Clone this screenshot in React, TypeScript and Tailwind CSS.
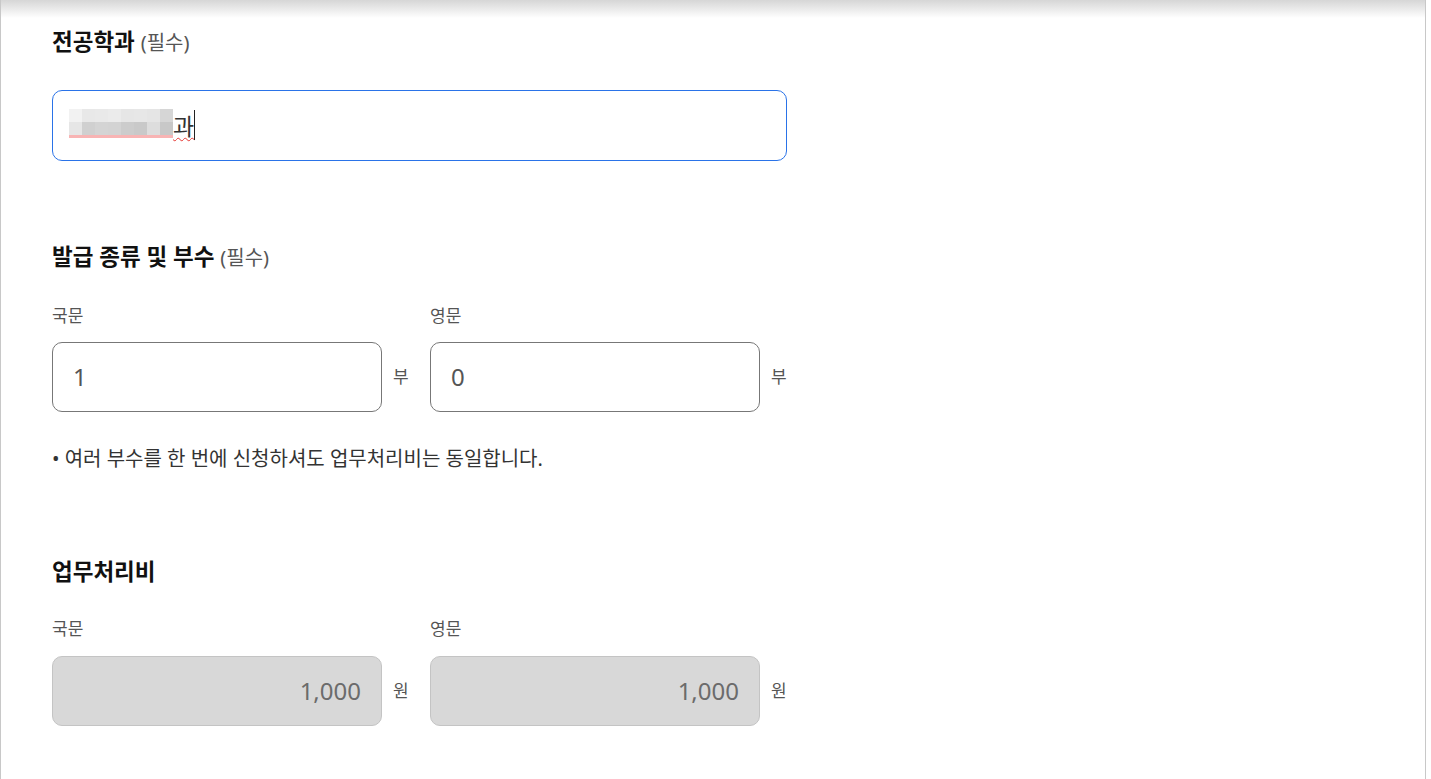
const FONT = "font-['Noto_Sans','Noto_Sans_CJK_KR',sans-serif]";

const MOSAIC = [
  ["#f2f2f2", "#e8e8e8", "#e9e9e9", "#ebebeb", "#e6e6e6", "#e7e7e7", "#e5e5e5", "#d6d6d6"],
  ["#e6e6e6", "#d0d0d0", "#d4d4d4", "#d3d3d3", "#cccccc", "#c9c9c9", "#dddddd", "#c8c8c8"],
];

function Label({ children }: { children: React.ReactNode }) {
  return <p className="text-[17px] leading-none text-[#555]">{children}</p>;
}

function CountField({ label, value }: { label: string; value: string }) {
  return (
    <div className="flex flex-col gap-[18px]">
      <Label>{label}</Label>
      <div className="flex items-center">
        <div className="flex h-[70px] w-[330px] items-center rounded-[10px] border border-[#777] bg-white px-[20px] text-[24px] text-[#555]">
          {value}
        </div>
        <span className="ml-[11px] w-[17px] text-[17px] text-[#555]">부</span>
      </div>
    </div>
  );
}

function FeeField({ label, value }: { label: string; value: string }) {
  return (
    <div className="flex flex-col gap-[19px]">
      <Label>{label}</Label>
      <div className="flex items-center">
        <div className="flex h-[70px] w-[330px] items-center justify-end rounded-[10px] border border-[#c4c4c4] bg-[#d8d8d8] px-[20px] text-[24px] text-[#6b6b6b]">
          {value}
        </div>
        <span className="ml-[11px] w-[17px] text-[17px] text-[#555]">원</span>
      </div>
    </div>
  );
}

export default function App() {
  return (
    <div className={`${FONT} h-[779px] w-full overflow-hidden bg-white`}>
      <div className="relative h-full w-[1426px] border-x border-[#c8c8c8] bg-white">
        <div className="absolute inset-x-0 top-0 h-[18px] bg-gradient-to-b from-[#d6d6d6] to-white" />
        <div className="relative px-[51px] pt-[26px]">
          <h2 className="text-[22.5px] font-bold leading-[32px] text-[#111]">
            전공학과 <span className="text-[20px] font-normal text-[#555]">(필수)</span>
          </h2>
          <div className="mt-[31px] flex h-[71px] w-[735px] items-center rounded-[10px] border border-[#2a73e8] bg-white px-[16px]">
            <div className="flex items-end">
              <div className="relative mb-[4px]">
                <div className="grid grid-cols-8">
                  {MOSAIC.flat().map((c, i) => (
                    <div key={i} className="h-[13px] w-[13px]" style={{ background: c }} />
                  ))}
                </div>
                <div className="h-[3px] w-full bg-[#f8b4b4]" />
              </div>
              <span className="text-[23px] leading-[32px] text-[#333] underline decoration-wavy decoration-[#e53935] decoration-1 underline-offset-2">과</span>
              <span className="mb-[2px] h-[30px] w-px bg-[#222]" />
            </div>
          </div>

          <h2 className="mt-[80px] text-[22.5px] font-bold leading-[32px] text-[#111]">
            발급 종류 및 부수 <span className="text-[20px] font-normal text-[#555]">(필수)</span>
          </h2>
          <div className="mt-[33px] flex gap-[20px]">
            <CountField label="국문" value="1" />
            <CountField label="영문" value="0" />
          </div>
          <p className="mt-[32px] text-[20px] text-[#333]">• 여러 부수를 한 번에 신청하셔도 업무처리비는 동일합니다.</p>

          <h2 className="mt-[82px] text-[22.5px] font-bold leading-[32px] text-[#111]">업무처리비</h2>
          <div className="mt-[32px] flex gap-[20px]">
            <FeeField label="국문" value="1,000" />
            <FeeField label="영문" value="1,000" />
          </div>
        </div>
      </div>
    </div>
  );
}
